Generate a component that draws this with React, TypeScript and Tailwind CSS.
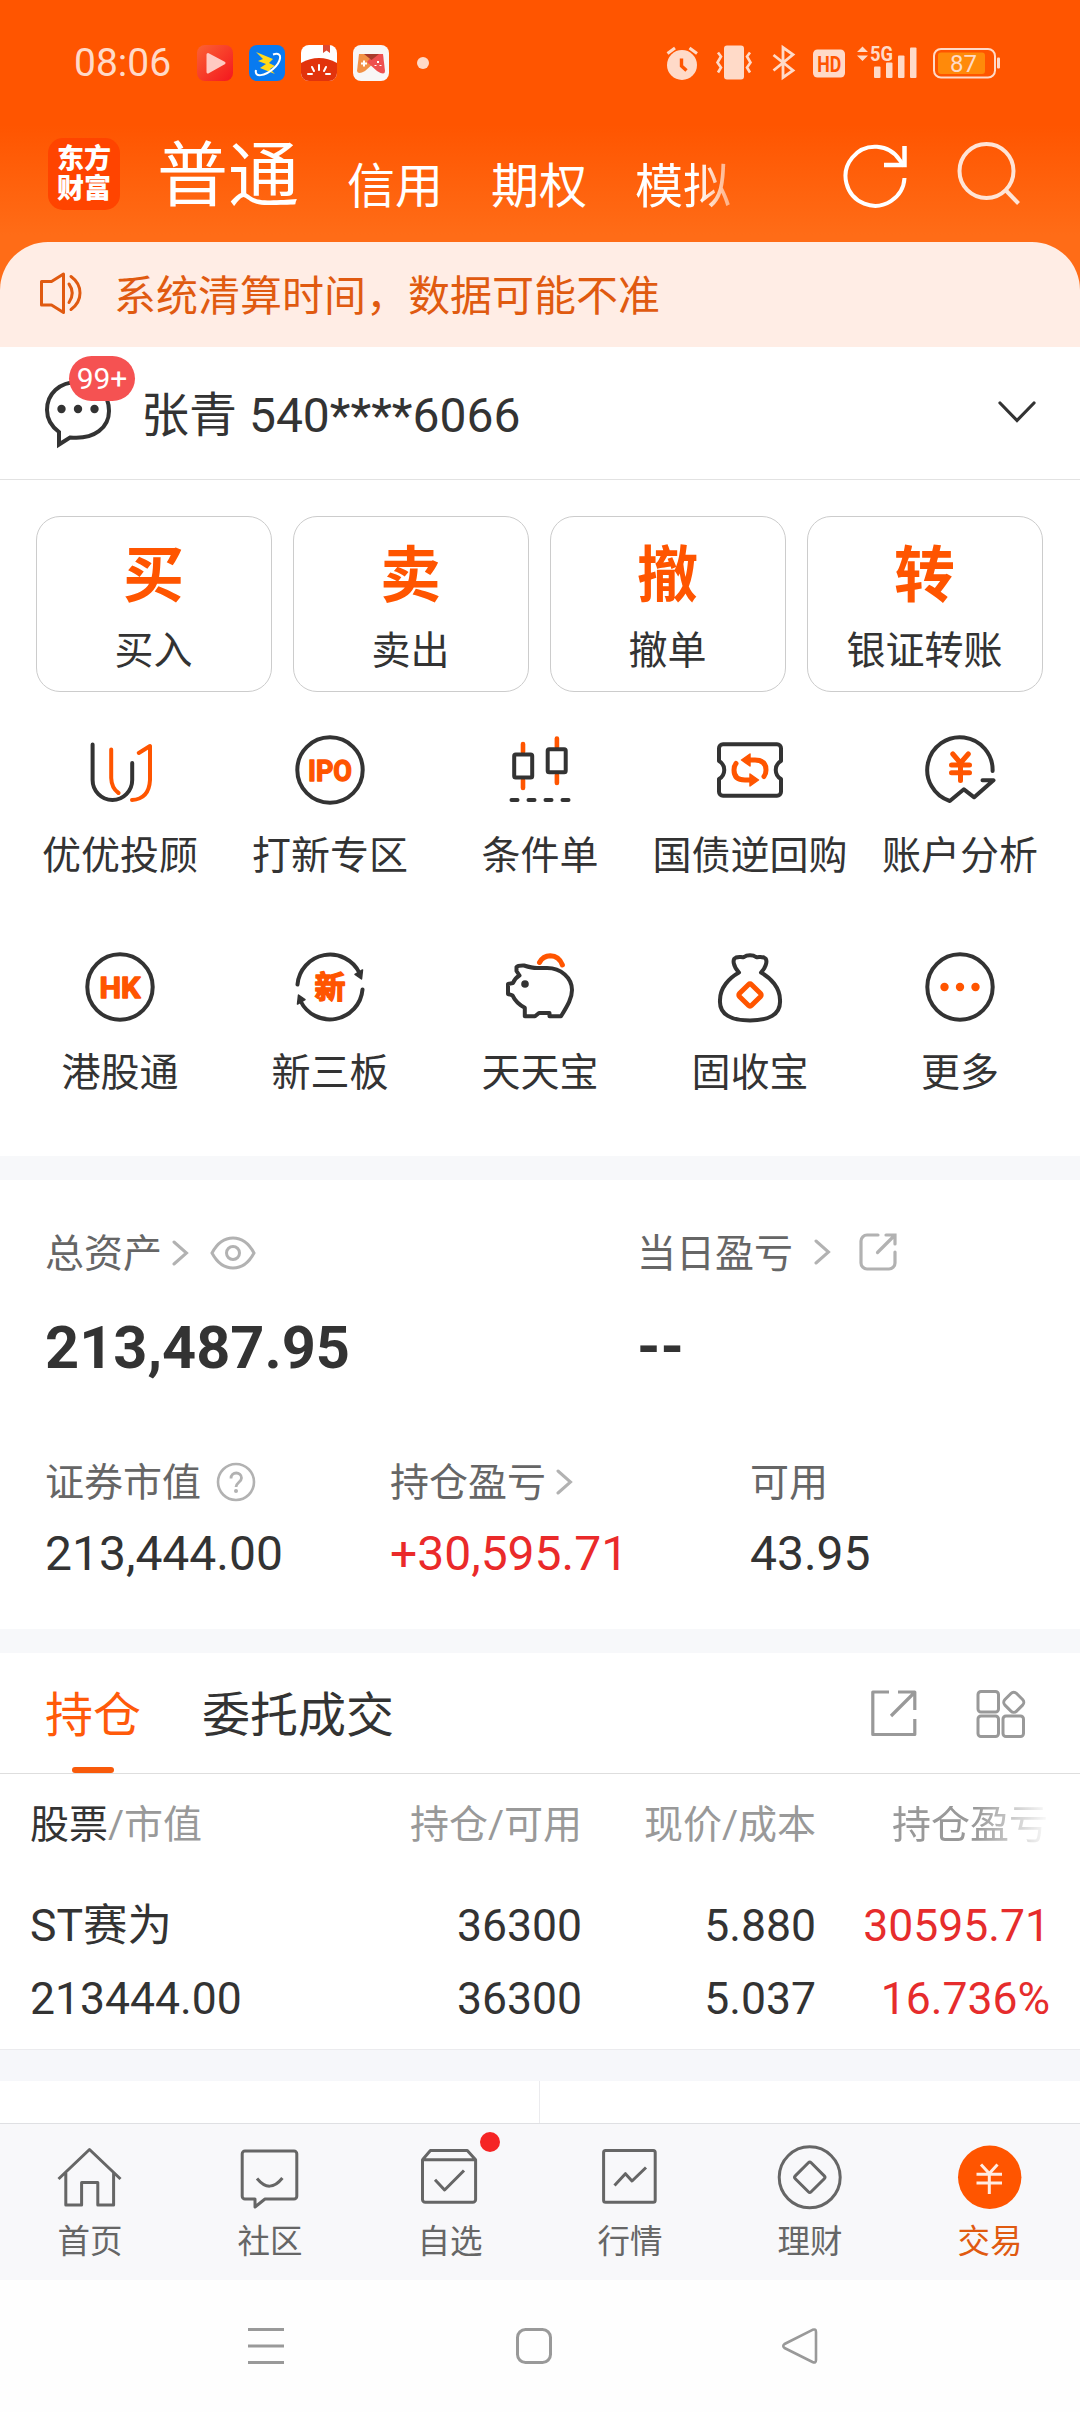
import type { ReactNode } from 'react'

const INK = '#333333'
const ORANGE = '#ff5500'

const ACTIONS = [
  { mark: '买', label: '买入' },
  { mark: '卖', label: '卖出' },
  { mark: '撤', label: '撤单' },
  { mark: '转', label: '银证转账' },
]

/* ── Shortcut icons, all on a 72 grid ── */

function Glyph({ children }: { children: ReactNode }) {
  return (
    <svg width="72" height="72" viewBox="0 0 72 72" fill="none" stroke={INK} strokeWidth="4" strokeLinecap="round" strokeLinejoin="round">
      {children}
    </svg>
  )
}

function GlyphText({ children, size, width, y }: { children: string; size: number; width: number; y: number }) {
  return (
    <text
      x="36"
      y={y}
      textAnchor="middle"
      fontSize={size}
      fontWeight="700"
      fill={ORANGE}
      stroke={ORANGE}
      strokeWidth="1.4"
      textLength={width}
      lengthAdjust="spacingAndGlyphs"
    >
      {children}
    </text>
  )
}

const SHORTCUTS = [
  {
    label: '优优投顾',
    icon: (
      <Glyph>
        <path d="M8.6 10.5V46a19.8 20 0 0 0 39.6 0V29" />
        <path stroke={ORANGE} d="M27.2 15.5V44Q27.5 54 34.500 59" />
        <path stroke={ORANGE} d="M54.8 19L66 12V46Q65 65 48 66" />
      </Glyph>
    ),
  },
  {
    label: '打新专区',
    icon: (
      <Glyph>
        <circle cx="36" cy="36" r="32.7" />
        <GlyphText size={30} width={44} y={46.7}>IPO</GlyphText>
      </Glyph>
    ),
  },
  {
    label: '条件单',
    icon: (
      <Glyph>
        <path stroke={ORANGE} strokeWidth="4.6" d="M19 10V18M19 46V54M52.9 4.5V13M52.9 41V49" />
        <rect x="10.2" y="20.5" width="18" height="23" rx="1.5" />
        <rect x="43.7" y="15.3" width="18" height="23" rx="1.5" />
        <path d="M7.5 66H13.5M24.5 66H30.5M41.5 66H47.5M58.5 66H64.5" />
      </Glyph>
    ),
  },
  {
    label: '国债逆回购',
    icon: (
      <Glyph>
        <path d="M5 27V14.3a4 4 0 0 1 4-4H63a4 4 0 0 1 4 4V27c-7 4-7 14 0 18V57.7a4 4 0 0 1-4 4H9a4 4 0 0 1-4-4V45c7-4 7-14 0-18z" />
        <path stroke={ORANGE} strokeWidth="5" d="M35 26H41Q52 26 52 36Q52 40 50 42.500M37 46H31Q20 46 20 36Q20 32 22 29.500" />
        <path fill={ORANGE} stroke={ORANGE} strokeWidth="1.5" d="M27.5 26L36 20V32ZM44.5 46L36 40V52Z" />
      </Glyph>
    ),
  },
  {
    label: '账户分析',
    icon: (
      <Glyph>
        <path d="M68.6 37A32.7 32.7 0 1 0 25.8 67L39.9 55.3L50.2 63.3L69.5 46.3H58.5" />
        <path stroke={ORANGE} strokeWidth="5" d="M28.8 20L36.5 29L44.3 20M36.5 29V46.5M27.5 31H45.5M27.5 38.7H45.5" />
      </Glyph>
    ),
  },
  {
    label: '港股通',
    icon: (
      <Glyph>
        <circle cx="36" cy="36" r="32.7" />
        <GlyphText size={30} width={41} y={46.7}>HK</GlyphText>
      </Glyph>
    ),
  },
  {
    label: '新三板',
    icon: (
      <Glyph>
        <path d="M3.5 33.5A32.7 32.7 0 0 1 65.5 22M68.5 38.5A32.7 32.7 0 0 1 6.5 50" />
        <path fill={INK} strokeWidth="1.5" d="M67.5 28L61 23.5L68.5 19ZM4.5 44L11 48.5L3.5 53Z" />
        <GlyphText size={31} width={31} y={47}>新</GlyphText>
      </Glyph>
    ),
  },
  {
    label: '天天宝',
    icon: (
      <Glyph>
        <path d="M15.5 24.5L12.500 20V16Q14 14.300 20 14.500Q28 17 33 17H43C57 17 68 27 68 39C68 47 64 54 57 65.300H45.500V62H35L31 65.300H20.800V56.700Q12 52 8.500 44.300L4 43V33L9 32Q11 27 15.500 24.500Z" />
        <circle cx="21" cy="33" r="3.8" fill={INK} stroke="none" />
        <path stroke={ORANGE} strokeWidth="5" d="M35.5 11.500Q39 5 46.300 4.800Q55 5 58.400 14" />
      </Glyph>
    ),
  },
  {
    label: '固收宝',
    icon: (
      <Glyph>
        <path d="M25 21.5C19 15 18 8 22 6.5C25 5.5 28 6.5 30 6C33 3.5 39 3.5 42 6C44 6.5 47 5.5 50 6.5C54 8 53 15 47 21.5C57 27 66 37 66 49C67 64 54 69.500 36 69.500C18 69.500 5 64 6 49C6 37 15 27 25 21.500Z" />
        <rect x="27.5" y="35.5" width="17" height="17" rx="2" transform="rotate(45 36 44)" stroke={ORANGE} strokeWidth="5" />
      </Glyph>
    ),
  },
  {
    label: '更多',
    icon: (
      <Glyph>
        <circle cx="36" cy="36" r="32.7" />
        <g fill={ORANGE} stroke="none">
          <circle cx="20.5" cy="36" r="4.2" />
          <circle cx="36" cy="36" r="4.2" />
          <circle cx="51.5" cy="36" r="4.2" />
        </g>
      </Glyph>
    ),
  },
]

const HOLDINGS = [
  { cells: ['ST赛为', '36300', '5.880', '30595.71'] },
  { cells: ['213444.00', '36300', '5.037', '16.736%'] },
]

const TABS = [
  {
    label: '首页',
    icon: <path d="M4.5 38L35.5 8.5L66.5 38M11.8 32V64H27.6V41.5H43.8V64H59.6V32" />,
  },
  {
    label: '社区',
    icon: <path d="M11 10H60a2.8 2.8 0 0 1 2.8 2.8V55.2a2.8 2.8 0 0 1-2.8 2.8H31L21 66V58H11a2.8 2.8 0 0 1-2.8-2.8V12.8a2.8 2.8 0 0 1 2.8-2.8zM23 37.5Q35.7 53 48.4 37" />,
  },
  {
    label: '自选',
    dot: true,
    icon: <path d="M8.5 18.7H61.6V58.5a2.8 2.8 0 0 1-2.8 2.8H11.3a2.8 2.8 0 0 1-2.8-2.8zL16.4 9.5H53.3L61.6 18.7M21 38.7L30.6 49L50 29.5" />,
  },
  {
    label: '行情',
    icon: (
      <>
        <rect x="9.6" y="9.5" width="51.6" height="51.8" rx="2" />
        <path d="M20.5 44.5L31.4 32.7L38 40L52 26.5" />
      </>
    ),
  },
  {
    label: '理财',
    icon: (
      <>
        <circle cx="35.7" cy="36.3" r="30.5" />
        <rect x="24.5" y="25" width="22.5" height="22.5" rx="2" transform="rotate(45 35.7 36.3)" />
      </>
    ),
  },
  {
    label: '交易',
    active: true,
    icon: (
      <>
        <circle cx="35.7" cy="36.3" r="31.7" fill={ORANGE} stroke="none" />
        <path stroke="#ffece2" d="M27 23.5L35.3 32.5L43.5 23.5M35.3 32.5V53M22.5 33.3H48M22.5 42H48" strokeLinecap="butt" />
      </>
    ),
  },
]

function StatusBar() {
  return (
    <div className="h-[126px] flex items-center justify-between pl-[74px] pr-[80px] text-[#ffdac8]">
      <div className="flex items-center">
        <span className="w-[123px] text-[39px] leading-none">08:06</span>
        <div className="flex gap-4">
          <svg width="36" height="36" viewBox="0 0 36 36">
            <defs>
              <linearGradient id="play" x1="0" y1="0" x2="1" y2="1">
                <stop offset="0" stopColor="#fb6234" />
                <stop offset="1" stopColor="#f4161e" />
              </linearGradient>
            </defs>
            <rect width="36" height="36" rx="8" fill="url(#play)" />
            <path d="M11 9.5L27 18L11 27Z" fill="#ffc9c2" stroke="#ffc9c2" strokeWidth="3" strokeLinejoin="round" />
          </svg>
          <svg width="36" height="36" viewBox="0 0 36 36">
            <rect width="36" height="36" rx="8" fill="#087af0" />
            <path d="M7 7L24 14L20 18L26 21L21 24L26 29L11 23L17 19L9 16L14 14Z" fill="#ffd91a" />
            <path d="M24 9.500C35 6 32 17 24 24C16 31 5 33 7 25" fill="none" stroke="#fff" strokeWidth="2" />
          </svg>
          <svg width="36" height="36" viewBox="0 0 36 36">
            <defs>
              <clipPath id="round">
                <rect width="36" height="36" rx="8" />
              </clipPath>
            </defs>
            <g clipPath="url(#round)">
              <rect width="36" height="36" fill="#fff" />
              <path d="M0 18Q18 8 36 18V36H0Z" fill="#e2330c" />
              <path d="M22 0H29V8L25.5 5.5L22 8Z" fill="#dd4a31" />
              <path d="M18 20V25M11 22L13 26M25 22L23 26M7 29H11M29 29H25" stroke="#fff" strokeWidth="2" strokeLinecap="round" />
            </g>
          </svg>
          <svg width="36" height="36" viewBox="0 0 36 36">
            <rect width="36" height="36" rx="8" fill="#f8f6f6" />
            <path d="M6 9H16L21 18L12 26Q5 30 4 26Z" fill="#f29146" />
            <path d="M30 9H21L14 17L24 26Q32 31 32 26Z" fill="#ee4f50" />
            <path d="M11 9H26L18.5 15Z" fill="#a83a2c" />
            <path d="M8 18.5H14M11 15.5V21.5" stroke="#fff" strokeWidth="2" />
            <path d="M25 16V18M22.5 20V21M27.5 20V21" stroke="#fff" strokeWidth="2" />
          </svg>
        </div>
        <span className="ml-[28px] size-3 rounded-full bg-[#ffdac8]" />
      </div>

      <svg width="336" height="40" viewBox="664 42.5 336 40" fill="currentColor">
        {/* alarm */}
        <circle cx="682" cy="64.5" r="15" />
        <path d="M667.5 53L675 47.5M697 53L689.5 47.5" stroke="currentColor" strokeWidth="3" />
        <path d="M681.5 58V65.5L686.5 70" fill="none" stroke="#ff5500" strokeWidth="3.4" />
        {/* vibrate */}
        <rect x="724" y="45" width="20" height="34" rx="3" />
        <path d="M718 52L721 56L717.5 62L721 67L718 72M750 52L747 56L750.5 62L747 67L750 72" fill="none" stroke="currentColor" strokeWidth="2.6" />
        {/* bluetooth */}
        <path d="M773.5 54.5L793 70L783 77V47L793 54L773.5 70" fill="none" stroke="currentColor" strokeWidth="2.8" />
        {/* hd */}
        <rect x="813" y="49" width="32" height="28" rx="4.5" />
        <text x="829.2" y="71" textAnchor="middle" fontSize="22" fontWeight="700" fill="#ff5500" textLength="24" lengthAdjust="spacingAndGlyphs">HD</text>
        {/* signal */}
        <path d="M857 51.5L862.5 46L868 51.5ZM857 55L862.5 60.5L868 55Z" />
        <text x="870" y="60" fontSize="20" fontWeight="700" textLength="23" lengthAdjust="spacingAndGlyphs">5G</text>
        <rect x="874" y="66" width="6.5" height="11.5" rx="1" />
        <rect x="886" y="62" width="6.5" height="15.5" rx="1" />
        <rect x="898" y="55" width="6.5" height="22.5" rx="1" />
        <rect x="910" y="47" width="6.5" height="30.5" rx="1" />
        {/* battery */}
        <rect x="934" y="48.5" width="61" height="28.5" rx="7" fill="none" stroke="currentColor" strokeWidth="2" />
        <rect x="938" y="52" width="47" height="21.5" rx="3" fill="#ff8a0a" />
        <rect x="997" y="57" width="3" height="11" rx="1" />
        <text x="963.5" y="71.5" textAnchor="middle" fontSize="24">87</text>
      </svg>
    </div>
  )
}

function Header() {
  return (
    <div className="h-[116px] flex pl-[48px] text-white">
      <div className="mt-3 size-[72px] rounded-[15px] bg-[#ff4400] flex flex-col items-center justify-center font-black text-[27px] leading-[30px]">
        <span>东方</span>
        <span>财富</span>
      </div>
      <nav className="ml-[37px] flex items-start leading-none">
        <span className="mt-[14px] text-[71px]">普通</span>
        <span className="ml-[48px] mt-[37px] text-[48px]">信用</span>
        <span className="ml-[48px] mt-[37px] text-[48px]">期权</span>
        <span className="ml-[48px] mt-[37px] text-[48px] [mask-image:linear-gradient(to_right,#000_65%,transparent_130%)]">模拟</span>
      </nav>
      <svg className="ml-[110px] mt-[15px]" width="68" height="68" viewBox="0 0 68 68" fill="none" stroke="#fff" strokeWidth="4">
        <path d="M63.5 37A29.500 29.500 0 1 1 59 19.500L63 25" />
        <path d="M63.5 5V24H43" strokeWidth="4.5" />
      </svg>
      <svg className="ml-[47px] mt-[14px]" width="68" height="68" viewBox="0 0 68 68" fill="none" stroke="#ffe4d6" strokeWidth="4">
        <circle cx="30.5" cy="31" r="27" />
        <path d="M49.5 50L62.5 63.5" />
      </svg>
    </div>
  )
}

function Chevron() {
  return (
    <svg width="18" height="28" viewBox="0 0 18 28" fill="none" stroke="#b2b2b2" strokeWidth="3" strokeLinecap="round">
      <path d="M3 2L15.5 13L3 24" />
    </svg>
  )
}

function Assets() {
  return (
    <section className="h-[449px] pt-[49px] pl-[45px]">
      <div className="flex">
        <div className="w-[592px]">
          <div className="flex items-center h-[50px] text-[39px] leading-none text-[#666]">
            总资产
            <span className="ml-[9px]"><Chevron /></span>
            <svg className="ml-[21px] -mt-[2px]" width="46" height="34" viewBox="0 0 46 34" fill="none" stroke="#b2b2b2" strokeWidth="3">
              <path d="M2 17Q10 2 23 2Q36 2 44 17Q36 32 23 32Q10 32 2 17Z" />
              <circle cx="23" cy="17" r="6.5" />
            </svg>
          </div>
          <div className="mt-[37px] text-[59.5px] leading-[64px] font-bold">213,487.95</div>
        </div>
        <div>
          <div className="flex items-center h-[50px] text-[39px] leading-none text-[#666]">
            当日盈亏
            <span className="ml-[20px] -mt-[2px]"><Chevron /></span>
            <svg className="ml-[27px] -mt-[4px]" width="40" height="40" viewBox="0 0 40 40" fill="none" stroke="#b2b2b2" strokeWidth="3.2" strokeLinecap="round">
              <path d="M20 3H9a6 6 0 0 0-6 6V31a6 6 0 0 0 6 6H31a6 6 0 0 0 6-6V20M28 3H37V12M36 4L19.5 20.5" />
            </svg>
          </div>
          <div className="mt-[36px] text-[59.5px] leading-[64px] font-bold">--</div>
        </div>
      </div>

      <div className="mt-[78px] flex">
        <div className="w-[345px]">
          <div className="flex items-center h-[50px] text-[39px] leading-none text-[#666]">
            证券市值
            <svg className="ml-[15px] -mt-[2px]" width="40" height="40" viewBox="0 0 40 40" fill="none" stroke="#b2b2b2" strokeWidth="2.6">
              <circle cx="20" cy="20" r="18" />
              <path d="M15 16.500C15 9 25.500 9.500 25.500 16C25.500 20 20 20.500 20 25" strokeWidth="2.8" />
              <circle cx="20" cy="29" r="2" fill="#b2b2b2" stroke="none" />
            </svg>
          </div>
          <div className="mt-[18px] text-[48px] leading-[56px]">213,444.00</div>
        </div>
        <div className="w-[360px]">
          <div className="flex items-center h-[50px] text-[39px] leading-none text-[#666]">
            持仓盈亏
            <span className="ml-[9px]"><Chevron /></span>
          </div>
          <div className="mt-[18px] text-[48px] leading-[56px] text-[#ea2a2a]">+30,595.71</div>
        </div>
        <div>
          <div className="flex items-center h-[50px] text-[39px] leading-none text-[#666]">可用</div>
          <div className="mt-[18px] text-[48px] leading-[56px]">43.95</div>
        </div>
      </div>
    </section>
  )
}

function Positions() {
  return (
    <section>
      <div className="h-[121px] flex items-center pl-[45px] border-b border-[#dedede] text-[48px] leading-none">
        <div className="relative h-full flex items-center pt-[6px] text-[#ff5a0a]">
          持仓
          <span className="absolute bottom-0 left-1/2 -translate-x-1/2 w-[42px] h-[6px] rounded-full bg-[#f85a0a]" />
        </div>
        <div className="ml-[61px] pt-[6px]">委托成交</div>
        <svg className="ml-[474px]" width="50" height="50" viewBox="0 0 50 50" fill="none" stroke="#999" strokeWidth="3.2">
          <path d="M21 4H4.800V46.500H46.800V31M30 4H46.800V22M46 5L23 28" strokeLinejoin="round" />
        </svg>
        <svg className="ml-[57px]" width="52" height="52" viewBox="0 0 52 52" fill="none" stroke="#999" strokeWidth="3">
          <rect x="3" y="4.5" width="20.5" height="20.5" rx="3" />
          <rect x="3" y="29" width="20.5" height="20.5" rx="3" />
          <rect x="28" y="29" width="20.5" height="20.5" rx="3" />
          <rect x="30.5" y="7" width="16.5" height="16.5" rx="4" transform="rotate(45 38.7 15.3)" />
        </svg>
      </div>

      <div className="h-[99px] grid grid-cols-[300px_252px_234px_235px] items-center pt-[3px] pl-[30px] text-[39px] leading-none text-[#999]">
        <div><span className="text-[#333]">股票</span>/市值</div>
        <div className="text-right">持仓/可用</div>
        <div className="text-right">现价/成本</div>
        <div className="pl-[76px] whitespace-nowrap [mask-image:linear-gradient(to_right,#000_68%,transparent)]">持仓盈亏</div>
      </div>

      <div className="h-[177px] pt-[17px] border-b border-[#ebebee]">
        {HOLDINGS.map(row => (
          <div key={row.cells[0]} className="h-[73px] grid grid-cols-[300px_252px_234px_234px] items-center pl-[30px] text-[44.5px] leading-none">
            {row.cells.map((cell, i) => (
              <div key={i} className={i === 0 ? '' : i === 3 ? 'text-right text-[#e62c2c]' : 'text-right'}>{cell}</div>
            ))}
          </div>
        ))}
      </div>
    </section>
  )
}

export default function App() {
  return (
    <div className="w-[1080px] h-[2412px] overflow-hidden bg-white text-[#333] font-['Roboto','Noto_Sans_CJK_SC',sans-serif]">
      <header className="bg-[linear-gradient(to_bottom,#ff5500_0px,#ff5500_125px,#ff6c17_235px,#ff6c17_347px)]">
        <StatusBar />
        <Header />
        <div className="h-[105px] rounded-t-[48px] bg-[#ffede5] flex items-center pl-[38px] text-[42px] leading-none text-[#e05a10]">
          <svg className="-mt-[5px]" width="46" height="46" viewBox="0 0 46 46" fill="none" stroke="#e05a10" strokeWidth="3" strokeLinejoin="round" strokeLinecap="round">
            <path d="M3.5 12.5H13.5L25.5 5V43.5L13.5 36H3.5ZM31 15Q37.5 24 31 33.5M33 7.500Q42 14 42 24Q42 34 33 40.500" />
          </svg>
          <span className="ml-[30px] mt-[5px]">系统清算时间，数据可能不准</span>
        </div>
      </header>

      {/* Account switcher */}
      <div className="h-[133px] flex items-center pl-[42px] pr-[43px] border-b border-[#e2e2e2]">
        <div className="relative w-[99px] h-[76px]">
          <svg className="-mt-[1px]" width="72" height="76" viewBox="0 0 72 76" fill="none" stroke={INK} strokeWidth="4">
            <path d="M36 8C17 8 5 20 5 36C5 45 9 52 17 58V70.500L28 63.500C53 66 67 53 67 37C67 20 55 8 36 8Z" />
            <g fill={INK} stroke="none">
              <circle cx="19.5" cy="35" r="4.2" />
              <circle cx="36" cy="35" r="4.2" />
              <circle cx="52.5" cy="35" r="4.2" />
            </g>
          </svg>
          <span className="absolute left-[27px] -top-[19px] w-[66px] h-[45px] rounded-full bg-[#f55252] text-white text-[30px] leading-[46px] text-center">99+</span>
        </div>
        <span className="mt-[5px] text-[48px] leading-none">张青 540****6066</span>
        <svg className="ml-auto -mt-[2px]" width="40" height="24" viewBox="0 0 40 24" fill="none" stroke={INK} strokeWidth="3.2" strokeLinecap="round">
          <path d="M3 3L20 20.5L37 3" />
        </svg>
      </div>

      {/* Trade actions */}
      <div className="grid grid-cols-4 gap-[21px] pl-[36px] pr-[37px] pt-[36px]">
        {ACTIONS.map(a => (
          <button key={a.label} className="h-[176px] rounded-3xl border border-[#ccc] flex flex-col items-center pt-[29px] pr-px leading-none">
            <span className="text-[61px] font-bold text-[#ff5500]">{a.mark}</span>
            <span className="mt-[25px] text-[39px]">{a.label}</span>
          </button>
        ))}
      </div>

      {/* Shortcuts */}
      <div className="h-[464px] grid grid-cols-5 auto-rows-[217px] px-[15px] pt-[42px]">
        {SHORTCUTS.map(s => (
          <div key={s.label} className="flex flex-col items-center">
            {s.icon}
            <span className="mt-[31px] text-[39px] leading-none whitespace-nowrap">{s.label}</span>
          </div>
        ))}
      </div>

      <div className="h-[24px] bg-[#f7f8fa]" />
      <Assets />
      <div className="h-[24px] bg-[#f7f8fa]" />
      <Positions />
      <div className="h-[31px] bg-[#f6f7fa]" />
      <div className="h-[42px] grid grid-cols-2">
        <div className="border-r border-[#ebebee]" />
      </div>

      {/* Bottom tabs */}
      <nav className="h-[157px] grid grid-cols-6 border-t border-[#dfe0e3] bg-[#f8f8fa] pt-[17px]">
        {TABS.map(t => (
          <div key={t.label} className={`relative flex flex-col items-center ${t.active ? 'text-[#e05a10]' : 'text-[#666]'}`}>
            <svg width="72" height="72" viewBox="0 0 72 72" fill="none" stroke="#666" strokeWidth="3" strokeLinejoin="round">
              {t.icon}
            </svg>
            {t.dot && <span className="absolute left-[120px] -top-[9px] size-5 rounded-full bg-[#f52525]" />}
            <span className="mt-[13px] text-[32.5px] leading-none">{t.label}</span>
          </div>
        ))}
      </nav>

      {/* System navigation */}
      <div className="h-[132px] flex items-center pl-[246px] bg-[#fefefe]">
        <svg width="40" height="40" viewBox="0 0 40 40" stroke="#999" strokeWidth="3">
          <path d="M2 3.5H38M2 20H38M2 36.5H38" />
        </svg>
        <svg className="ml-[228px]" width="40" height="40" viewBox="0 0 40 40" fill="none" stroke="#999" strokeWidth="3">
          <rect x="3.5" y="3.5" width="33" height="33" rx="8" />
        </svg>
        <svg className="ml-[226px]" width="40" height="40" viewBox="0 0 40 40" fill="none" stroke="#999" strokeWidth="2.6" strokeLinejoin="round">
          <path d="M4.5 18L32.500 3.800Q36 2.500 36 6V34Q36 37.500 32.500 36L4.500 22Q2 20 4.500 18Z" />
        </svg>
      </div>
    </div>
  )
}
